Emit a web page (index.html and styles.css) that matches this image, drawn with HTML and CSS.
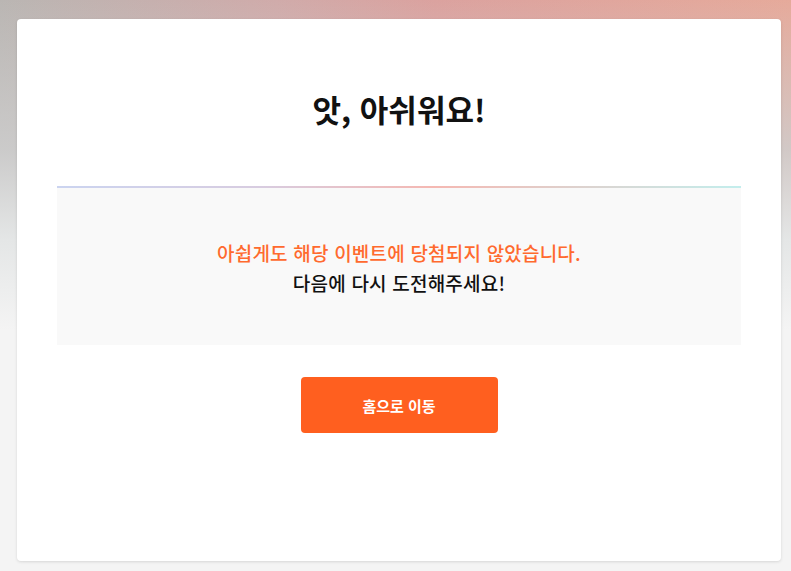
FILE: index.html
```html
<!DOCTYPE html>
<html lang="ko">
<head>
<meta charset="utf-8">
<title>이벤트 결과</title>
<link rel="stylesheet" href="styles.css">
</head>
<body>
  <main class="card">
    <header class="head">
      <h1 class="title">앗, 아쉬워요!</h1>
    </header>
    <section class="result">
      <p class="msg msg-accent">아쉽게도 해당 이벤트에 당첨되지 않았습니다.</p>
      <p class="msg">다음에 다시 도전해주세요!</p>
    </section>
    <div class="actions">
      <a class="btn" href="#">홈으로 이동</a>
    </div>
  </main>
</body>
</html>
```
FILE: styles.css
```css
* { box-sizing: border-box; }
html, body { height: 100%; }
body {
  margin: 0;
  padding: 19px 10px 10px 17px;
  font-family: "Noto Sans CJK KR", "Noto Sans", sans-serif;
  background:
    linear-gradient(to bottom, rgba(204,204,204,0) 0px, rgba(206,206,206,0.85) 150px, rgba(228,230,230,1) 240px, #f4f4f4 330px),
    linear-gradient(to right, #bab6b3 0%, #d0abaa 35%, #dba29f 55%, #e6aa9b 100%);
  background-color: #f4f4f4;
}
.card {
  height: 542px;
  background: #fff;
  border-radius: 4px;
  box-shadow: 0 1px 3px rgba(0,0,0,0.12);
  padding: 0 40px;
  display: flex;
  flex-direction: column;
}
.head {
  height: 167px;
  display: flex;
  justify-content: center;
  padding-top: 68px;
}
.title {
  margin: 0;
  font-size: 31px;
  font-weight: 700;
  line-height: 44px;
  color: #111;
  letter-spacing: 0;
}
.result {
  height: 159px;
  background: #f9f9f9;
  border-top: 2px solid transparent;
  border-image: linear-gradient(to right, #cbd4f0 0%, #d8cce0 30%, #f5b8b2 55%, #c3eeed 100%) 1;
  display: flex;
  flex-direction: column;
  justify-content: center;
  align-items: center;
  padding-top: 2px;
}
.msg {
  margin: 0;
  font-size: 19px;
  line-height: 30px;
  font-weight: 500;
  color: #111;
  letter-spacing: 0.2px;
}
.msg-accent { color: #ff6a2e; }
.actions {
  display: flex;
  justify-content: center;
  padding-top: 32px;
}
.btn {
  width: 197px;
  height: 56px;
  background: #ff5f1f;
  border-radius: 4px;
  color: #fff;
  font-size: 15px;
  font-weight: 700;
  text-decoration: none;
  display: flex;
  align-items: center;
  justify-content: center;
}
```
